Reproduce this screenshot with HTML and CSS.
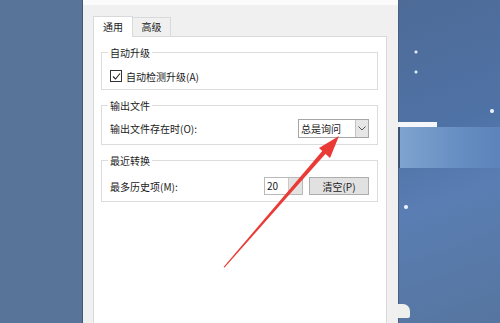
FILE: index.html
```html
<!DOCTYPE html>
<html lang="zh-CN">
<head>
  <meta charset="UTF-8" />
  <title>选项</title>
  <link rel="stylesheet" href="styles.css">
</head>
<body>
  <div class="desktop">
    <div class="side-left"></div>

    <div class="dialog">
      <div class="title-edge"></div>
      <div class="tabs">
        <div class="tab active">通用</div>
        <div class="tab">高级</div>
      </div>
      <div class="panel">
        <fieldset class="group">
          <legend>自动升级</legend>
          <label class="row check-row">
            <span class="checkbox">
              <svg width="9" height="9" viewBox="0 0 9 9"><polyline points="1,4.5 3.5,7 8,1.5" fill="none" stroke="#222" stroke-width="1.1"/></svg>
            </span>
            自动检测升级(A)
          </label>
        </fieldset>

        <fieldset class="group">
          <legend>输出文件</legend>
          <div class="row row-output">
            <span class="row-label">输出文件存在时(O):</span>
            <div class="select">
              <span class="select-value">总是询问</span>
              <span class="select-btn">
                <svg width="8" height="5" viewBox="0 0 8 5"><polyline points="0.5,0.5 4,4 7.5,0.5" fill="none" stroke="#555" stroke-width="1"/></svg>
              </span>
            </div>
          </div>
        </fieldset>

        <fieldset class="group">
          <legend>最近转换</legend>
          <div class="row row-recent">
            <span class="row-label">最多历史项(M):</span>
            <div class="spin">
              <span class="spin-value">20</span>
              <span class="spin-btn"></span>
            </div>
            <button class="btn">清空(P)</button>
          </div>
        </fieldset>
      </div>
    </div>

    <div class="side-right">
      <div class="white-bar"></div>
      <div class="glow"></div>
      <div class="blob"></div>
    </div>

    <!-- red annotation arrow pointing at the dropdown -->
    <svg class="arrow" width="500" height="323" viewBox="0 0 500 323">
      <polygon points="223.6,267 224.6,267.4 327.6,151.4 324.4,148.6" fill="#ea3a35"/>
      <polygon points="339,136 319,148 330,158" fill="#ea3a35"/>
    </svg>
  </div>
</body>
</html>
```

FILE: styles.css
```css
body {
  margin: 0;
  font-family: "Noto Sans CJK SC", "Noto Sans", sans-serif;
  font-size: 10px;
  color: #1a1a1a;
}

.desktop {
  position: relative;
  display: flex;
  width: 500px;
  height: 323px;
  overflow: hidden;
}

.side-left {
  width: 83px;
  background: #587499;
  box-shadow: inset -1px 0 0 #3f5878;
}

.dialog {
  width: 315px;
  display: flex;
  flex-direction: column;
  background: #f0f0f0;
}

.title-edge {
  height: 5px;
  background: #fbfbfb;
}

.tabs {
  display: flex;
  align-items: flex-end;
  margin-top: 11px;
  padding-left: 10px;
  position: relative;
  z-index: 1;
}

.tab {
  height: 18px;
  line-height: 18px;
  width: 37px;
  text-align: center;
  border: 1px solid #d9d9d9;
  border-left: none;
  border-bottom: none;
  background: #f0f0f0;
}

.tab.active {
  width: 38px;
  height: 20px;
  line-height: 19px;
  border-left: 1px solid #d9d9d9;
  background: #fff;
  margin-bottom: -1px;
}

.panel {
  flex: 1;
  margin: 0 11px 0 10px;
  padding: 8px 8px 0 7px;
  background: #fff;
  border: 1px solid #d9d9d9;
  border-bottom: none;
}

.group {
  margin: 0 0 8px;
  border: 1px solid #dcdcdc;
  padding: 8px 8px 5px;
  min-width: 0;
}

.group legend {
  padding: 0 2px;
  margin-left: -2px;
  line-height: 15px;
}

.row {
  display: flex;
  align-items: center;
}

.check-row {
  height: 16px;
  gap: 4px;
}

.checkbox {
  width: 10px;
  height: 10px;
  border: 1px solid #333;
  display: flex;
  align-items: center;
  justify-content: center;
}

.group:nth-of-type(2) {
  padding-top: 6px;
  padding-bottom: 6px;
}

.group:nth-of-type(3) {
  padding-top: 9px;
  padding-bottom: 6px;
}

.row-label {
  flex: 1;
}

.select {
  width: 69px;
  height: 17px;
  border: 1px solid #a5a5a5;
  display: flex;
  background: #fff;
}

.select-value {
  flex: 1;
  padding-left: 2px;
  line-height: 17px;
}

.select-btn {
  width: 12px;
  border-left: 1px solid #c4c4c4;
  background: #e6e6e6;
  display: flex;
  align-items: center;
  justify-content: center;
}

.spin {
  width: 37px;
  height: 16px;
  border: 1px solid #b9b9b9;
  display: flex;
  margin-right: 6px;
}

.spin-value {
  flex: 1;
  padding-left: 2px;
  line-height: 16px;
}

.spin-btn {
  width: 13px;
  background: #e3e3e3;
  border-left: 1px solid #c9c9c9;
}

.btn {
  width: 60px;
  height: 18px;
  padding: 0;
  border: 1px solid #adadad;
  background: #e1e1e1;
  font: inherit;
  color: #1a1a1a;
}

.side-right {
  position: relative;
  flex: 1;
  background:
    radial-gradient(circle at 18px 52px, #dfe9f7 0 1px, transparent 2px),
    radial-gradient(circle at 18px 72px, #dfe9f7 0 1px, transparent 2px),
    radial-gradient(circle at 94px 111px, #e8f0fb 0 1.5px, transparent 2.5px),
    radial-gradient(circle at 72px 145px, #c8dbf1 0 1px, transparent 2px),
    radial-gradient(circle at 8px 207px, #e8f0fb 0 1.5px, transparent 2.5px),
    linear-gradient(160deg, #4e6b97 0%, #4f72a6 40%, #5a7eb3 60%, #56759f 100%);
  box-shadow: inset 1px 0 0 #4a5f7e;
}

.white-bar {
  margin-top: 122px;
  width: 39px;
  height: 5px;
  background: #f4f6fa;
}

.glow {
  height: 41px;
  background: linear-gradient(90deg, #7fa4d0, #678ec2 60%, #5d84ba);
  box-shadow: inset 2px 0 0 #3d5270;
}

.blob {
  position: absolute;
  left: 0;
  top: 304px;
  width: 12px;
  height: 14px;
  background: #eef0ee;
  border-radius: 0 7px 2px 0;
}

.arrow {
  position: absolute;
  left: 0;
  top: 0;
  pointer-events: none;
}
```
